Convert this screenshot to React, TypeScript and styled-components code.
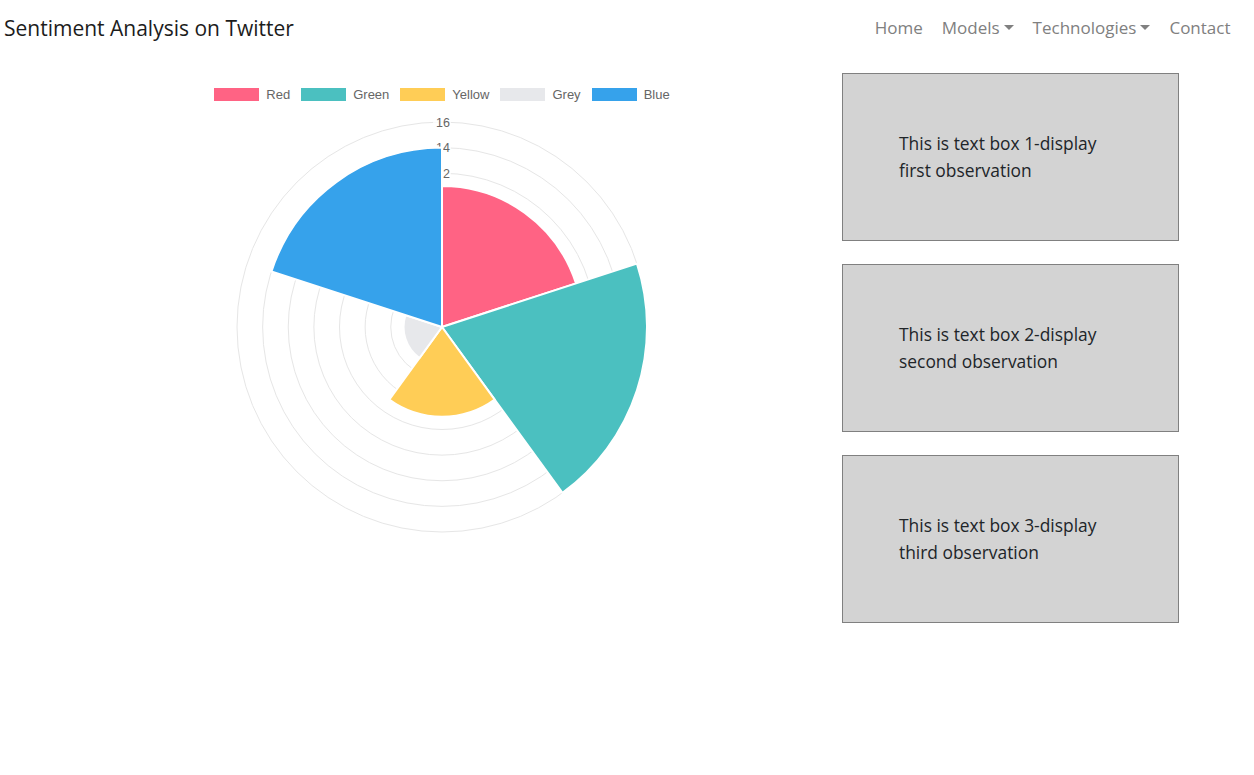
import styled, { createGlobalStyle } from "styled-components";

const GlobalStyle = createGlobalStyle`
  body {
    margin: 0;
    background: #fff;
    font-family: "Open Sans", "Noto Sans", sans-serif;
    color: #212529;
  }
`;

const Navbar = styled.nav`
  display: flex;
  align-items: center;
  justify-content: space-between;
  height: 55px;
  padding: 0 14px 0 4px;
`;

const Brand = styled.span`
  font-size: 21px;
  color: #1c1c1c;
`;

const NavList = styled.ul`
  display: flex;
  list-style: none;
  margin: 0;
  padding: 0;
`;

const NavLink = styled.li<{ $dropdown?: boolean }>`
  padding: 0 9.5px;
  font-size: 17px;
  color: #808080;
  display: flex;
  align-items: center;

  &::after {
    content: "";
    display: ${(p) => (p.$dropdown ? "inline-block" : "none")};
    margin-left: 4px;
    border-top: 5px solid #808080;
    border-left: 5px solid transparent;
    border-right: 5px solid transparent;
  }
`;

const Main = styled.main`
  display: grid;
  grid-template-columns: 836px 1fr;
`;

const ChartColumn = styled.section`
  display: flex;
  flex-direction: column;
  align-items: center;
  padding: 32px 0 0 48px;
`;

const Legend = styled.div`
  display: flex;
  align-items: center;
  gap: 11px;
  height: 14px;
  font-family: "Liberation Sans", Arial, sans-serif;
  font-size: 13px;
  color: #666;
`;

const LegendItem = styled.div`
  display: flex;
  align-items: center;
  gap: 7px;
`;

const Swatch = styled.span<{ $color: string }>`
  width: 45px;
  height: 13px;
  background: ${(p) => p.$color};
`;

const ChartSvg = styled.svg`
  display: block;
  margin-top: 16px;
`;

const TickLabel = styled.text`
  font-family: "Liberation Sans", Arial, sans-serif;
  font-size: 12.5px;
  fill: #666;
`;

const BoxColumn = styled.aside`
  display: flex;
  flex-direction: column;
  gap: 23px;
  padding: 18px 0 0 6px;
`;

const TextBox = styled.div`
  box-sizing: border-box;
  width: 337px;
  height: 168px;
  display: flex;
  align-items: center;
  padding: 0 56px;
  background: #d3d3d3;
  border: 1px solid #808080;
  font-size: 17.4px;
  line-height: 27px;
`;

const slices = [
  { label: "Red", value: 11, color: "#ff6384" },
  { label: "Green", value: 16, color: "#4bc0c0" },
  { label: "Yellow", value: 7, color: "#ffcd56" },
  { label: "Grey", value: 3, color: "#e7e8eb" },
  { label: "Blue", value: 14, color: "#36a2eb" },
];

const R = 205;
const MAX = 16;
const CX = 215;
const CY = 210;
const ticks = [2, 4, 6, 8, 10, 12, 14, 16];

function wedge(i: number, value: number) {
  const r = (R * value) / MAX;
  const step = (2 * Math.PI) / slices.length;
  const a0 = -Math.PI / 2 + step * i;
  const a1 = a0 + step;
  const x0 = CX + r * Math.cos(a0);
  const y0 = CY + r * Math.sin(a0);
  const x1 = CX + r * Math.cos(a1);
  const y1 = CY + r * Math.sin(a1);
  return `M${CX} ${CY} L${x0} ${y0} A${r} ${r} 0 0 1 ${x1} ${y1} Z`;
}

function PolarChart() {
  return (
    <ChartSvg width={430} height={420} viewBox="0 0 430 420">
      {ticks.map((t) => (
        <circle key={t} cx={CX} cy={CY} r={(R * t) / MAX} fill="none" stroke="#e6e6e6" strokeWidth={1} />
      ))}
      {ticks.map((t) => {
        const y = CY - (R * t) / MAX;
        const w = t >= 10 ? 18 : 11;
        return (
          <g key={t}>
            <rect x={CX - w / 2} y={y - 8} width={w} height={16} fill="rgba(255,255,255,0.75)" />
            <TickLabel x={CX + 1} y={y + 4.5} textAnchor="middle">
              {t}
            </TickLabel>
          </g>
        );
      })}
      {slices.map((s, i) => (
        <path key={s.label} d={wedge(i, s.value)} fill={s.color} stroke="#fff" strokeWidth={2} strokeLinejoin="round" />
      ))}
    </ChartSvg>
  );
}

export default function App() {
  return (
    <>
      <GlobalStyle />
      <Navbar>
        <Brand>Sentiment Analysis on Twitter</Brand>
        <NavList>
          <NavLink>Home</NavLink>
          <NavLink $dropdown>Models</NavLink>
          <NavLink $dropdown>Technologies</NavLink>
          <NavLink>Contact</NavLink>
        </NavList>
      </Navbar>
      <Main>
        <ChartColumn>
          <Legend>
            {slices.map((s) => (
              <LegendItem key={s.label}>
                <Swatch $color={s.color} />
                {s.label}
              </LegendItem>
            ))}
          </Legend>
          <PolarChart />
        </ChartColumn>
        <BoxColumn>
          <TextBox>This is text box 1-display first observation</TextBox>
          <TextBox>This is text box 2-display second observation</TextBox>
          <TextBox>This is text box 3-display third observation</TextBox>
        </BoxColumn>
      </Main>
    </>
  );
}
